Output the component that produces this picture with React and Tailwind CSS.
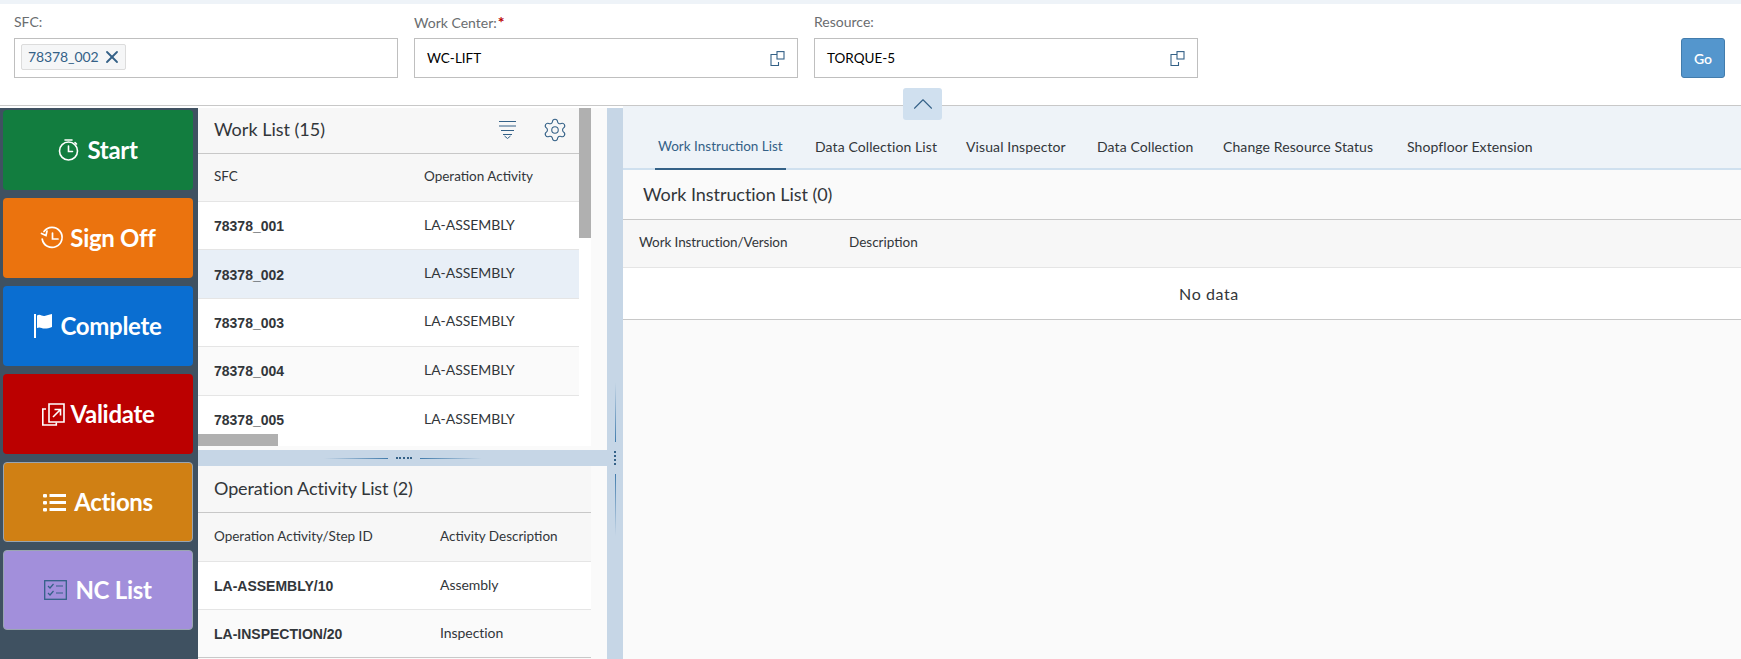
import React from "react";
import { Settings, X, ChevronUp } from "lucide-react";

const font = { fontFamily: '"Lato", "Open Sans", sans-serif' };

const ValueHelp = () => (
  <svg width="15" height="15" viewBox="0 0 15 15" fill="none" stroke="#346187" strokeWidth="1.1">
    <path d="M7 3.5H1v11h7.5V11" />
    <rect x="7" y="0.6" width="7" height="7.4" />
  </svg>
);

const Timer = () => (
  <svg width="21" height="22" viewBox="0 0 21 22" fill="none" stroke="#fff" strokeWidth="1.6" strokeLinecap="round">
    <circle cx="10.5" cy="12" r="9" />
    <path d="M7 1h7M10.5 7v5.5H14.5M17 3.5l1.5 1.5" />
  </svg>
);
const History = () => (
  <svg width="24" height="24" viewBox="0 0 24 24" fill="none" stroke="#fff" strokeWidth="1.7" strokeLinecap="round">
    <path d="M4 5.5A10 10 0 1 1 2.2 13" />
    <path d="M1.5 7.5l4.5 2 1-4.5" />
    <path d="M12.5 7v6h5.5" />
  </svg>
);
const FlagIcon = () => (
  <svg width="18" height="24" viewBox="0 0 18 24" fill="#fff">
    <rect x="0" y="0" width="2" height="24" />
    <path d="M3 1.5c3-2 5 1 7.5.5S15 .5 18 0v13c-3 1-4.500 1.500-7.500 1.500S6 12.500 3 14z" />
  </svg>
);
const ValidateIcon = () => (
  <svg width="23" height="23" viewBox="0 0 23 23" fill="none" stroke="#fff" strokeWidth="1.6">
    <path d="M4 6H.8v16h13.500v-2.500" />
    <path d="M7 3v16h15V1H7z" />
    <path d="M11 14l7-7M12.500 6.500H18.500V12.500" />
  </svg>
);
const ListIcon = () => (
  <svg width="23" height="19" viewBox="0 0 23 19" fill="#fff">
    <rect x="0" y="1" width="4" height="3.500" rx="1" />
    <rect x="0" y="8" width="4" height="3.500" rx="1" />
    <rect x="0" y="15" width="4" height="3.500" rx="1" />
    <rect x="6.500" y="1" width="16.500" height="3" />
    <rect x="6.500" y="8" width="16.500" height="3" />
    <rect x="6.500" y="15" width="16.500" height="3" />
  </svg>
);
const NcIcon = () => (
  <svg width="23" height="20" viewBox="0 0 23 20" fill="none" stroke="#346187" strokeWidth="1.2">
    <rect x="0.700" y="0.700" width="21.600" height="18.600" strokeWidth="1.300" />
    <path d="M4 6l2 2 3.500-4M4 13l2 2 3.500-4M12 6h7M12 13h7" />
  </svg>
);
const FilterIcon = () => (
  <svg width="17" height="20" viewBox="0 0 17 20" fill="none" stroke="#346187" strokeWidth="1">
    <path d="M0 1.500h17M0 6h17M2 10.500h13M4 14.500h9" />
    <path d="M5.500 16l3 2.500 3-2.500" />
  </svg>
);

function ActionButton({ label, bg, icon, border = "", gap = "gap-[8px]" }) {
  return (
    <button className={`h-[80px] w-[190px] rounded-[4px] flex items-center justify-center ${gap} text-white text-[24px] font-bold tracking-[-0.3px] ${bg} ${border}`}>
      {icon}
      <span>{label}</span>
    </button>
  );
}

const headCls = "text-[13.500px] text-[#32363a]";
const bold = { fontFamily: '"Liberation Sans", Arial, sans-serif' };

function Row({ a, b, bx, selected, odd, last, h = "h-[48.400px]" }) {
  return (
    <div className={`${h} flex items-center ${last ? "" : "border-b border-[#e5e5e5]"} ${selected ? "bg-[#e8eff7]" : odd ? "bg-[#fafafa]" : "bg-white"}`}>
      <span className={`pl-[16px] ${bx} shrink-0 pt-[2px] text-[14px] font-bold text-[#32363a]`} style={bold}>{a}</span>
      <span className="text-[14px] tracking-[-0.05px] text-[#32363a] pb-[3px]">{b}</span>
    </div>
  );
}

function Input({ w, children }) {
  return (
    <div className={`${w} h-[40px] border border-[#bfbfbf] bg-white flex items-center justify-between`}>
      {children}
    </div>
  );
}

function Field({ label, star, w, children }) {
  return (
    <div className={`${w} flex flex-col`}>
      <div className="h-[34px] pt-[9px] text-[14px] text-[#6a6d70] leading-[18px]">
        {label}
        {star && <span className="text-[#bb0000] text-[16px] font-bold ml-[1px]">*</span>}
      </div>
      {children}
    </div>
  );
}

export default function App() {
  const sfcs = ["78378_001", "78378_002", "78378_003", "78378_004", "78378_005"];
  const tabs = [
    { t: "Work Instruction List", w: "w-[131px]" },
    { t: "Data Collection List", w: "w-[125px]" },
    { t: "Visual Inspector", w: "w-[105px]" },
    { t: "Data Collection", w: "w-[100px]" },
    { t: "Change Resource Status", w: "w-[158px]" },
    { t: "Shopfloor Extension", w: "w-[130px]" },
  ];
  return (
    <div className="w-[1741px] h-[659px] overflow-hidden flex flex-col bg-white relative" style={font}>
      <div className="h-[4px] shrink-0 bg-[#eef3f8]" />
      <header className="h-[102px] shrink-0 border-b border-[#c8c8c8] flex pl-[14px] pr-[16px] gap-[16px]">
        <Field label="SFC:" w="w-[384px]">
          <Input w="w-full">
            <div className="ml-[6px] h-[26px] mb-[3px] w-[105px] flex items-center gap-[3px] pl-[6px] border border-[#dcdcdc] rounded-[2px] bg-[#f5f6f7] text-[14px] tracking-[-0.1px] text-[#346187]">
              <span>78378_002</span>
              <X size={20} strokeWidth={2.2} color="#346187" />
            </div>
          </Input>
        </Field>
        <Field label="Work Center:" star w="w-[384px]">
          <Input w="w-full">
            <span className="pl-[12px] text-[13.500px] text-black">WC-LIFT</span>
            <span className="pr-[12px]"><ValueHelp /></span>
          </Input>
        </Field>
        <Field label="Resource:" w="w-[384px]">
          <Input w="w-full">
            <span className="pl-[12px] text-[13.500px] text-black">TORQUE-5</span>
            <span className="pr-[12px]"><ValueHelp /></span>
          </Input>
        </Field>
        <div className="ml-auto pt-[34px]">
          <button className="w-[44px] h-[40px] rounded-[3px] bg-[#5496cd] border border-[#427cac] text-white text-[14px] font-semibold">Go</button>
        </div>
      </header>

      <button className="absolute left-[903px] top-[88px] w-[39px] h-[32px] rounded-[3px] bg-[#d0e0ef] flex items-center justify-center z-10">
        <ChevronUp size={34} strokeWidth={0.75} color="#346187" />
      </button>

      <main className="flex-1 min-h-0 flex">
        <aside className="w-[198px] shrink-0 mt-[2px] bg-[#3f5161] flex flex-col items-start pl-[3px] pt-[2px] gap-[8px]">
          <ActionButton label="Start" bg="bg-[#127d3f]" icon={<Timer />} />
          <ActionButton label="Sign Off" bg="bg-[#eb730e]" icon={<History />} gap="gap-[6px]" />
          <ActionButton label="Complete" bg="bg-[#0a6ed1]" icon={<FlagIcon />} />
          <ActionButton label="Validate" bg="bg-[#bb0000]" icon={<ValidateIcon />} gap="gap-[6px]" />
          <ActionButton label="Actions" bg="bg-[#d08014]" icon={<ListIcon />} border="border border-[#9aa5b1]" />
          <ActionButton label="NC List" bg="bg-[#a28fdb]" icon={<NcIcon />} border="border border-[#9aa5b1]" />
        </aside>

        <section className="w-[409px] shrink-0 mt-[2px] flex flex-col bg-[#fafafa]">
          <div className="h-[338px] shrink-0 flex relative mb-[4px] w-[393px] bg-white overflow-hidden">
            <div className="w-[381px] shrink-0">
              <div className="h-[46px] bg-[#f7f7f7] border-b border-[#c8c8c8] flex items-center justify-between pl-[16px] pr-[11px] pb-[2px]">
                <span className="text-[18px] text-[#32363a]">Work List (15)</span>
                <div className="flex items-center gap-[26px]">
                  <FilterIcon />
                  <Settings size={26} strokeWidth={1} color="#346187" />
                </div>
              </div>
              <div className="h-[48px] bg-[#f7f7f7] border-b border-[#e5e5e5] flex items-center pb-[3px]">
                <span className={`pl-[16px] w-[226px] shrink-0 ${headCls}`}>SFC</span>
                <span className={headCls}>Operation Activity</span>
              </div>
              {sfcs.map((s, i) => (
                <Row key={s} a={s} b="LA-ASSEMBLY" bx="w-[226px]" selected={i === 1} odd={i === 3} last={i === 4} />
              ))}
            </div>
            <div className="w-[12px] h-[130px] bg-[#b0b0b0]" />
            <div className="absolute left-0 bottom-0 w-[80px] h-[12px] bg-[#b0b0b0]" />
          </div>

          <div className="h-[16px] shrink-0 bg-[#c6d6e6] flex items-center justify-center gap-[8px]">
            <div className="w-[64px] h-[1px] bg-gradient-to-r from-transparent to-[#427cac]" />
            <div className="w-[16px] h-[2px] border-t-2 border-dotted border-[#346187]" />
            <div className="w-[62px] h-[1px] bg-gradient-to-l from-transparent to-[#427cac]" />
          </div>

          <div className="flex-1 w-[393px]">
            <div className="h-[47px] bg-[#f7f7f7] border-b border-[#c8c8c8] flex items-center pl-[16px] pb-[2px]">
              <span className="text-[18px] tracking-[-0.1px] text-[#32363a]">Operation Activity List (2)</span>
            </div>
            <div className="h-[49px] bg-[#f7f7f7] border-b border-[#e5e5e5] flex items-center pb-[2px]">
              <span className={`pl-[16px] w-[242px] shrink-0 ${headCls}`}>Operation Activity/Step ID</span>
              <span className={headCls}>Activity Description</span>
            </div>
            <Row a="LA-ASSEMBLY/10" b="Assembly" bx="w-[242px]" h="h-[48px]" />
            <div className="border-b border-[#c8c8c8]">
              <Row a="LA-INSPECTION/20" b="Inspection" bx="w-[242px]" h="h-[47px]" odd last />
            </div>
          </div>
        </section>

        <div className="w-[16px] shrink-0 mt-[2px] bg-[#c6d6e6] flex flex-col items-center pt-[274px] gap-[9px]">
          <div className="w-[1px] h-[60px] bg-gradient-to-b from-transparent to-[#427cac]" />
          <div className="w-[2px] h-[14px] border-l-2 border-dotted border-[#346187]" />
          <div className="w-[1px] h-[62px] bg-gradient-to-t from-transparent to-[#427cac]" />
        </div>

        <section className="flex-1 min-w-0 flex flex-col bg-[#fafafa]">
          <nav className="h-[64px] shrink-0 bg-[#eef3f8] border-b-2 border-[#cfe0ef] flex items-end pl-[32px] gap-[26px]">
            {tabs.map((tab, i) => (
              <div key={tab.t} className={`${tab.w} shrink-0 h-[40px] -mb-[2px] px-[3px] flex items-center pb-[6px] whitespace-nowrap border-b-2 ${i === 0 ? "text-[13.500px] border-[#346187] text-[#346187]" : "text-[14px] tracking-[0.1px] border-transparent text-[#32363a]"}`}>{tab.t}</div>
            ))}
          </nav>
          <div className="h-[50px] shrink-0 flex items-center pl-[20px] border-b border-[#c8c8c8]">
            <span className="text-[18px] tracking-[-0.05px] text-[#32363a]">Work Instruction List (0)</span>
          </div>
          <div className="h-[48px] shrink-0 bg-[#f7f7f7] border-b border-[#e5e5e5] flex items-center pb-[2px]">
            <span className="pl-[16px] w-[226px] shrink-0 text-[13.500px] tracking-[-0.1px] text-[#32363a]">Work Instruction/Version</span>
            <span className={headCls}>Description</span>
          </div>
          <div className="h-[52px] shrink-0 bg-white border-b border-[#c8c8c8] flex items-center justify-center pl-[54px] text-[16px] tracking-[0.6px] text-[#32363a]">No data</div>
        </section>
      </main>
    </div>
  );
}
